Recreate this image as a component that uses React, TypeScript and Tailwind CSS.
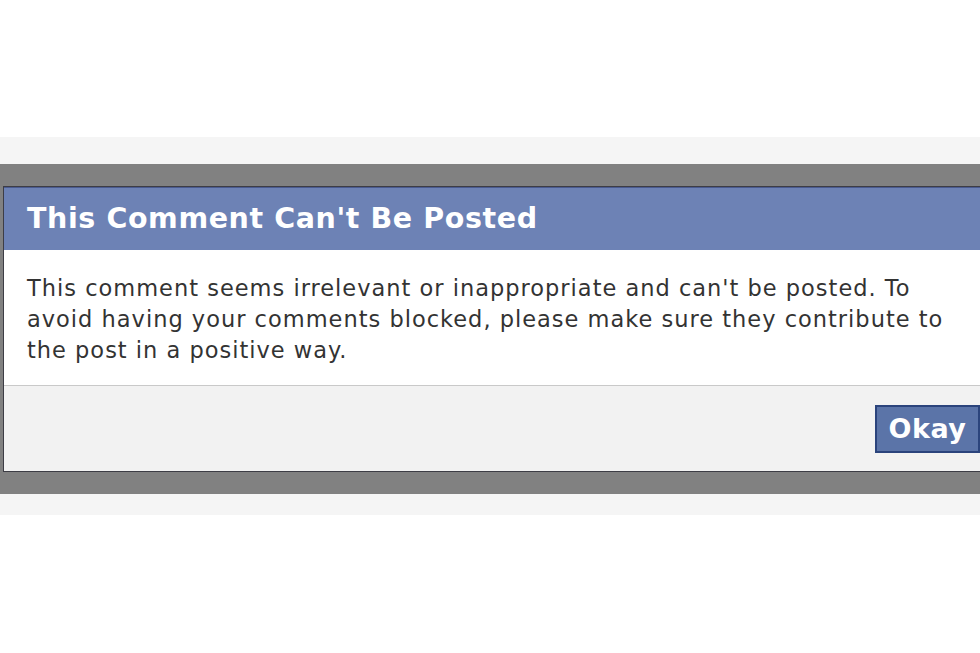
import React from "react";

export default function App() {
  return (
    <div
      className="w-[980px] h-[653px] overflow-hidden bg-white flex flex-col"
      style={{ fontFamily: '"DejaVu Sans", "Liberation Sans", sans-serif' }}
    >
      <div className="h-[137px] shrink-0 bg-white" />
      <div className="h-[27px] shrink-0 bg-[#f5f5f5]" />
      <div className="shrink-0 bg-[#818181] pt-[22px] pb-[22px] pl-[3px]">
        <div className="border-l border-t border-b border-[#3d3d45] bg-white flex flex-col">
          <div className="h-[63px] bg-[#6d82b5] border-t border-[#4a5a8f] flex items-center pl-[23px]">
            <span className="text-white font-bold text-[28.5px] leading-none tracking-[0.6px]">
              This Comment Can't Be Posted
            </span>
          </div>
          <div className="h-[135px] bg-white pt-[23px] pl-[23px] text-[#333333] text-[22.5px] leading-[31px] tracking-[1px] whitespace-nowrap">
            This comment seems irrelevant or inappropriate and can't be posted. To
            <br />
            avoid having your comments blocked, please make sure they contribute to
            <br />
            the post in a positive way.
          </div>
          <div className="h-[86px] bg-[#f2f2f2] border-t border-[#c9c9c9] flex items-center justify-end">
            <button className="w-[105px] h-[48px] bg-[#5b74a8] border-2 border-[#2b447c] text-white font-bold text-[27px] leading-none flex items-center justify-center tracking-[0.5px]">
              Okay
            </button>
          </div>
        </div>
      </div>
      <div className="h-[21px] shrink-0 bg-[#f5f5f5]" />
      <div className="flex-1 bg-white" />
    </div>
  );
}
